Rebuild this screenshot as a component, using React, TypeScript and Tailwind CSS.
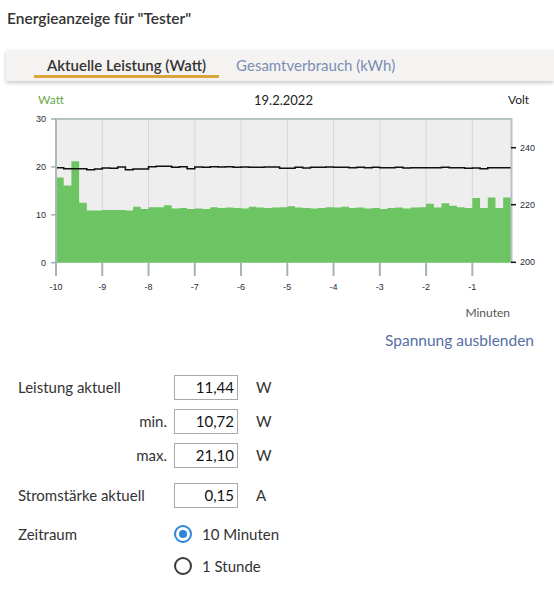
import React from "react";

// Power samples (W), one per 10 seconds, from -10 min up to now
const power: number[] = [
  17.8, 16.1, 21.2, 12.5, 10.9, 10.9, 11.0, 11.0, 11.0, 10.9, 11.7, 11.2, 11.6, 11.6, 12.0, 11.3,
  11.4, 11.2, 11.3, 11.2, 11.6, 11.4, 11.5, 11.4, 11.3, 11.7, 11.5, 11.4, 11.5, 11.6, 11.8, 11.5,
  11.4, 11.3, 11.4, 11.6, 11.5, 11.7, 11.4, 11.5, 11.3, 11.4, 11.2, 11.4, 11.5, 11.3, 11.5, 11.6,
  12.3, 11.5, 12.4, 11.9, 11.6, 11.4, 13.5, 11.4, 13.6, 11.4, 13.6, 11.4,
];

// Voltage trace as pixel heights inside the plot (page coordinates)
const volt: number[] = [
  167.7, 168.7, 168.7, 168.7, 169.7, 169.0, 168.0, 168.3, 167.0, 169.7, 169.0, 169.0, 166.7, 166.3,
  166.3, 167.3, 166.7, 168.7, 167.0, 167.3, 166.7, 167.0, 166.7, 167.3, 167.0, 167.3, 167.3, 167.0,
  167.0, 168.3, 168.3, 167.3, 168.0, 167.3, 167.3, 167.0, 167.3, 167.3, 167.7, 167.3, 167.7, 167.3,
  167.7, 167.7, 167.3, 168.0, 167.7, 167.7, 167.7, 167.7, 167.3, 167.7, 167.7, 168.3, 168.0, 168.7,
  167.7, 167.7, 167.7, 167.7,
];

const X0 = 56;
const X1 = 511;
const PX_MIN = 46.26;
const STEP = PX_MIN / 6;
const Y_TOP = 119;
const Y_ZERO = 262.7;
const PX_W = 4.79;

function Chart() {
  let d = `M ${X0} ${Y_ZERO}`;
  power.forEach((v, i) => {
    const xa = X0 + i * STEP;
    const xb = Math.min(X1, X0 + (i + 1) * STEP);
    if (xa >= X1) return;
    const y = Y_ZERO - v * PX_W;
    d += ` L ${xa} ${y} L ${xb} ${y}`;
  });
  d += ` L ${X1} ${Y_ZERO} Z`;

  let vd = "";
  volt.forEach((y, i) => {
    const xa = X0 + i * STEP;
    const xb = Math.min(X1, X0 + (i + 1) * STEP);
    if (xa >= X1) return;
    vd += `${i === 0 ? "M" : "L"} ${xa} ${y} L ${xb} ${y} `;
  });

  const minutes = [-10, -9, -8, -7, -6, -5, -4, -3, -2, -1];
  const leftTicks = [30, 20, 10, 0];
  const rightTicks = [
    { v: 240, y: 147.7 },
    { v: 220, y: 204.7 },
    { v: 200, y: 262.3 },
  ];

  return (
    <svg width={554} height={193} className="block" style={{ fontFamily: "'Liberation Sans', Arial, sans-serif" }}>
      <g transform="translate(0,-107)">
        <rect x={X0} y={Y_TOP} width={X1 - X0} height={Y_ZERO - Y_TOP} fill="#eeeeee" />
        {minutes.slice(1).map((m, i) => (
          <line key={m} x1={X0 + (i + 1) * PX_MIN} x2={X0 + (i + 1) * PX_MIN} y1={Y_TOP} y2={Y_ZERO} stroke="#d6d6d6" strokeWidth={1} />
        ))}
        <path d={d} fill="#6cc463" />
        <path d={vd} fill="none" stroke="#111111" strokeWidth={1.6} />
        {/* frame */}
        <line x1={X0 - 1} x2={X1 + 1} y1={Y_TOP} y2={Y_TOP} stroke="#b7c3c3" strokeWidth={2} />
        <line x1={X0} x2={X0} y1={Y_TOP - 1} y2={Y_ZERO} stroke="#aab8b8" strokeWidth={2} />
        <line x1={X1 + 0.5} x2={X1 + 0.5} y1={Y_TOP - 1} y2={Y_ZERO} stroke="#b7c3c3" strokeWidth={2} />
        {/* left axis */}
        {leftTicks.map((v) => {
          const y = Y_ZERO - v * PX_W;
          return (
            <g key={v}>
              <line x1={51} x2={56} y1={y} y2={y} stroke="#9fb0b0" strokeWidth={1.5} />
              <text x={46} y={y + 3} textAnchor="end" fontSize={9} fill="#2b2b3a">
                {v}
              </text>
            </g>
          );
        })}
        {/* right axis */}
        {rightTicks.map((t) => (
          <g key={t.v}>
            <line x1={511} x2={516} y1={t.y} y2={t.y} stroke="#111" strokeWidth={1.5} />
            <text x={520} y={t.y + 3} fontSize={9} fill="#2b2b3a">
              {t.v}
            </text>
          </g>
        ))}
        {/* minute axis */}
        {minutes.map((m, i) => {
          const x = X0 + i * PX_MIN;
          return (
            <g key={m}>
              <line x1={x} x2={x} y1={Y_ZERO} y2={276} stroke="#a6b4b4" strokeWidth={2} />
              <text x={x} y={290} textAnchor="middle" fontSize={9} fill="#2b2b3a">
                {m}
              </text>
            </g>
          );
        })}
      </g>
    </svg>
  );
}

function ValueBox({ value }: { value: string }) {
  return (
    <div className="w-[64px] h-[25px] border border-[#a9a9a9] bg-white flex items-center justify-end pr-[3px] text-[15px] text-[#111]">
      {value}
    </div>
  );
}

function Radio({ checked, label }: { checked: boolean; label: string }) {
  return (
    <div className="flex items-center gap-[10px]">
      {checked ? (
        <div className="w-[18px] h-[18px] rounded-full border-2 border-[#2d86d9] flex items-center justify-center">
          <div className="w-[8px] h-[8px] rounded-full bg-[#2d86d9]" />
        </div>
      ) : (
        <div className="w-[18px] h-[18px] rounded-full border-2 border-[#3a3a3a]" />
      )}
      <span className="text-[15px] text-[#333]">{label}</span>
    </div>
  );
}

export default function App() {
  return (
    <div
      className="w-[554px] h-[606px] bg-white text-[#333] overflow-hidden"
      style={{ fontFamily: "Lato, 'Noto Sans', sans-serif" }}
    >
      <div className="pt-[9px] pl-[7px] text-[15.5px] leading-[18px] font-semibold text-[#333]">
        Energieanzeige für "Tester"
      </div>

      <div className="mt-[23px] ml-[6px] h-[31px] bg-[#f4f3f1] shadow-[0_2px_4px_rgba(0,0,0,0.22)] flex items-stretch">
        <div className="ml-[28px] px-[13px] flex items-center relative text-[15px] font-semibold text-[#333]">
          Aktuelle Leistung (Watt)
          <div className="absolute left-0 right-0 bottom-[3px] h-[3px] bg-[#dca43c]" />
        </div>
        <div className="ml-[17px] flex items-center text-[15px] text-[#7b8db4]">Gesamtverbrauch (kWh)</div>
      </div>

      <div className="mt-[12px] h-[14px] relative text-[12px] leading-[14px]">
        <span className="absolute left-[38px] text-[#6aa84f]">Watt</span>
        <span className="absolute left-[254px] text-[13px] text-[#222]">19.2.2022</span>
        <span className="absolute left-[508px] text-[#222]">Volt</span>
      </div>

      <Chart />

      <div className="mt-[6px] h-[14px] flex justify-end pr-[44px] text-[12px] leading-[14px] text-[#555]">Minuten</div>

      <div className="mt-[10px] h-[20px] flex justify-end pr-[20px] text-[15.5px] leading-[20px] text-[#5670a3]">
        Spannung ausblenden
      </div>

      <div className="mt-[25px] ml-[18px] grid grid-cols-[149px_64px_auto] gap-x-[7px] items-center text-[15px] text-[#333]">
        <div>Leistung aktuell</div>
        <ValueBox value="11,44" />
        <div className="pl-[11px]">W</div>

        <div className="mt-[9px] text-right">min.</div>
        <div className="mt-[9px]"><ValueBox value="10,72" /></div>
        <div className="mt-[9px] pl-[11px]">W</div>

        <div className="mt-[9px] text-right">max.</div>
        <div className="mt-[9px]"><ValueBox value="21,10" /></div>
        <div className="mt-[9px] pl-[11px]">W</div>

        <div className="mt-[15px]">Stromstärke aktuell</div>
        <div className="mt-[15px]"><ValueBox value="0,15" /></div>
        <div className="mt-[15px] pl-[11px]">A</div>

        <div className="mt-[15px]">Zeitraum</div>
        <div className="mt-[15px] col-span-2"><Radio checked label="10 Minuten" /></div>

        <div />
        <div className="mt-[9px] col-span-2"><Radio checked={false} label="1 Stunde" /></div>
      </div>
    </div>
  );
}
